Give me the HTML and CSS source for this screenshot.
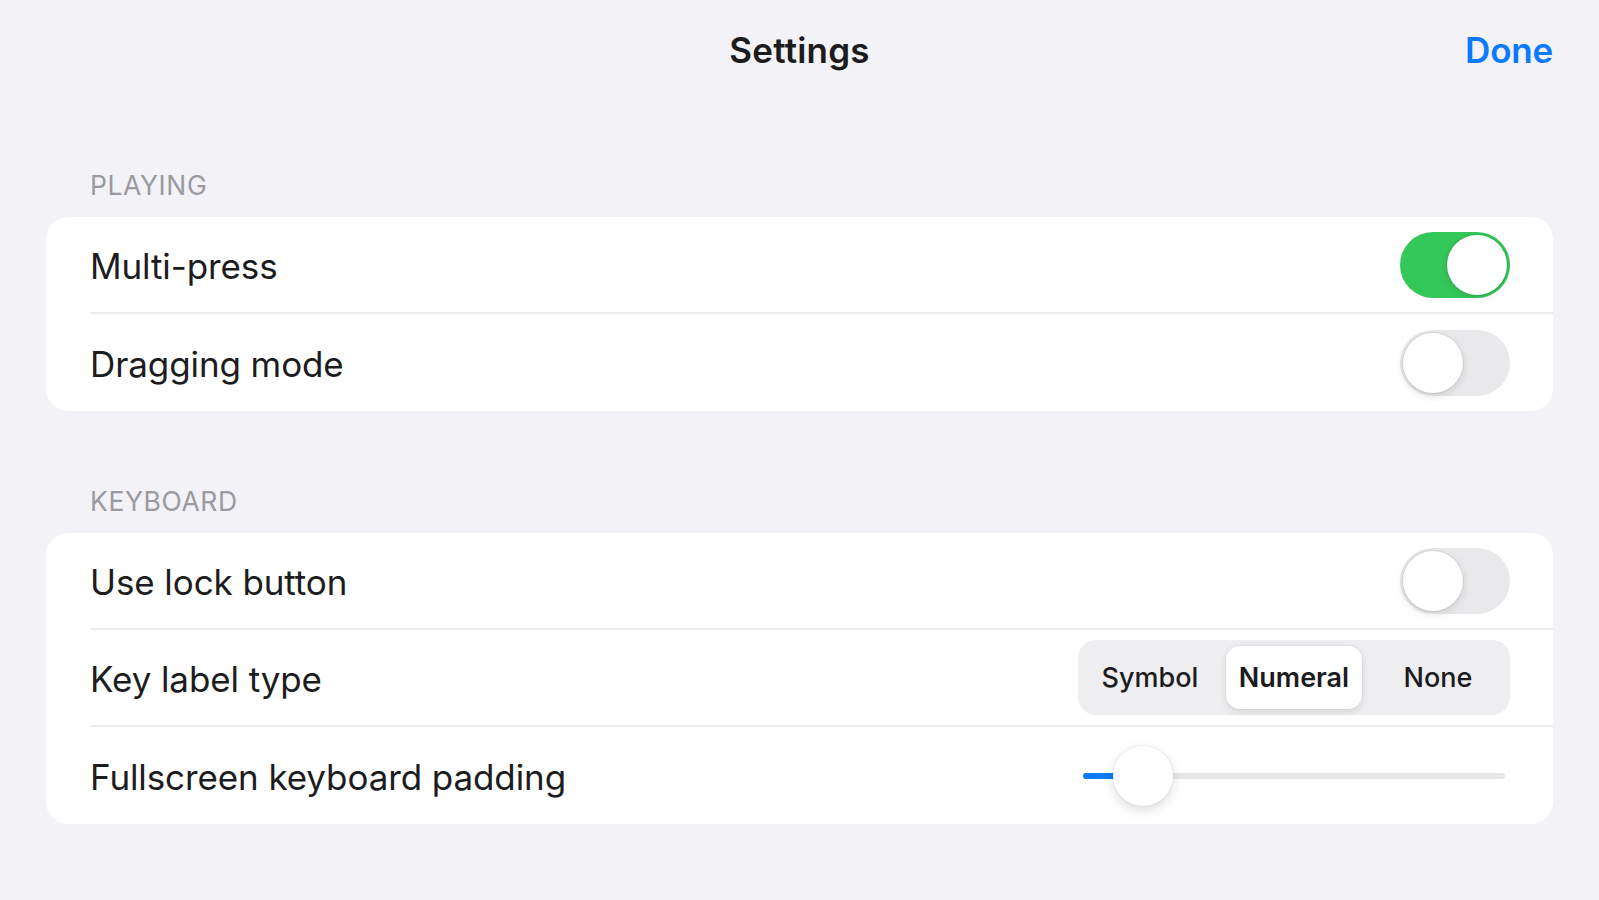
FILE: index.html
```html
<!DOCTYPE html>
<html lang="en">
<head>
<meta charset="utf-8">
<title>Settings</title>
<link rel="stylesheet" href="styles.css">
</head>
<body>
<div class="sheet">
  <header class="navbar">
    <div class="nav-side"></div>
    <h1 class="nav-title">Settings</h1>
    <div class="nav-side nav-right"><span class="nav-done">Done</span></div>
  </header>

  <section class="group group-first">
    <div class="group-label">PLAYING</div>
    <div class="card">
      <div class="row">
        <span class="row-label">Multi-press</span>
        <span class="switch on"><span class="knob"></span></span>
      </div>
      <div class="row">
        <span class="row-label">Dragging mode</span>
        <span class="switch"><span class="knob"></span></span>
      </div>
    </div>
  </section>

  <section class="group">
    <div class="group-label">KEYBOARD</div>
    <div class="card">
      <div class="row">
        <span class="row-label">Use lock button</span>
        <span class="switch"><span class="knob"></span></span>
      </div>
      <div class="row">
        <span class="row-label">Key label type</span>
        <div class="segmented">
          <span class="segment">Symbol</span>
          <span class="segment selected">Numeral</span>
          <span class="segment">None</span>
        </div>
      </div>
      <div class="row">
        <span class="row-label">Fullscreen keyboard padding</span>
        <div class="slider">
          <div class="track"><div class="fill" style="width: 65px"></div></div>
          <span class="thumb" style="left: 35px"></span>
        </div>
      </div>
    </div>
  </section>
</div>
</body>
</html>
```

FILE: styles.css
```css
* { box-sizing: border-box; }

html, body {
  margin: 0;
  padding: 0;
  background: #f2f2f7;
}

body {
  font-family: "Inter", "Liberation Sans", sans-serif;
  color: #1c1c1e;
  -webkit-font-smoothing: antialiased;
}

.sheet {
  width: 1599px;
  height: 900px;
  overflow: hidden;
}

.navbar {
  height: 100px;
  display: grid;
  grid-template-columns: 1fr auto 1fr;
  align-items: center;
  padding: 0 46px;
}

.nav-title {
  margin: 0;
  font-size: 35px;
  font-weight: 600;
  letter-spacing: 0.2px;
  color: #1c1c1e;
}

.nav-right {
  display: flex;
  justify-content: flex-end;
}

.nav-done {
  font-size: 35px;
  font-weight: 600;
  letter-spacing: -0.2px;
  color: #0a7aff;
}

.group {
  padding: 0 46px;
}

.group-first {
  padding-top: 69px;
}

.group + .group {
  padding-top: 74px;
}

.group-label {
  height: 32px;
  line-height: 32px;
  padding-left: 44px;
  margin-bottom: 16px;
  font-size: 26.5px;
  color: #9a9a9f;
  letter-spacing: 0.6px;
}

.card {
  background: #ffffff;
  border-radius: 22px;
  padding-left: 44px;
  overflow: hidden;
}

.row {
  height: 97px;
  display: flex;
  align-items: center;
  justify-content: space-between;
  padding-right: 43px;
  border-bottom: 2px solid #ececef;
}

.row:last-child {
  border-bottom: none;
}

.row-label {
  font-size: 35px;
  letter-spacing: -0.1px;
  color: #1c1c1e;
  padding-top: 3px;
}

.switch {
  position: relative;
  width: 110px;
  height: 66px;
  border-radius: 33px;
  background: #e9e9eb;
  display: flex;
  align-items: center;
  padding: 3px;
}

.switch .knob {
  width: 60px;
  height: 60px;
  border-radius: 50%;
  background: #ffffff;
  box-shadow: 0 0 0 1px rgba(0, 0, 0, 0.06), 0 3px 8px rgba(0, 0, 0, 0.12);
}

.switch.on {
  background: #34c759;
  justify-content: flex-end;
}

.switch.on .knob {
  box-shadow: 0 0 0 1px rgba(30, 140, 60, 0.25), 0 3px 8px rgba(0, 0, 0, 0.10);
}

.segmented {
  width: 432px;
  height: 75px;
  padding: 6px 0;
  border-radius: 18px;
  background: #eeeef0;
  display: grid;
  grid-template-columns: repeat(3, 1fr);
}

.segment {
  display: flex;
  align-items: center;
  justify-content: center;
  font-size: 27px;
  font-weight: 500;
  letter-spacing: 0;
  color: #1c1c1e;
  border-radius: 14px;
}

.segment.selected {
  margin: 0 4px;
  background: #ffffff;
  font-weight: 600;
  box-shadow: 0 3px 8px rgba(0, 0, 0, 0.10), 0 0 0 1px rgba(0, 0, 0, 0.03);
}

.slider {
  position: relative;
  width: 432px;
  height: 60px;
  display: flex;
  align-items: center;
  padding: 0 5px 0 5px;
}

.track {
  width: 100%;
  height: 6px;
  border-radius: 3px;
  background: #e6e6e9;
  overflow: hidden;
}

.fill {
  height: 100%;
  background: #0a7aff;
}

.thumb {
  position: absolute;
  top: 0;
  width: 60px;
  height: 60px;
  border-radius: 50%;
  background: #ffffff;
  box-shadow: 0 0 0 1px rgba(0, 0, 0, 0.04), 0 4px 12px rgba(0, 0, 0, 0.14);
}
```
